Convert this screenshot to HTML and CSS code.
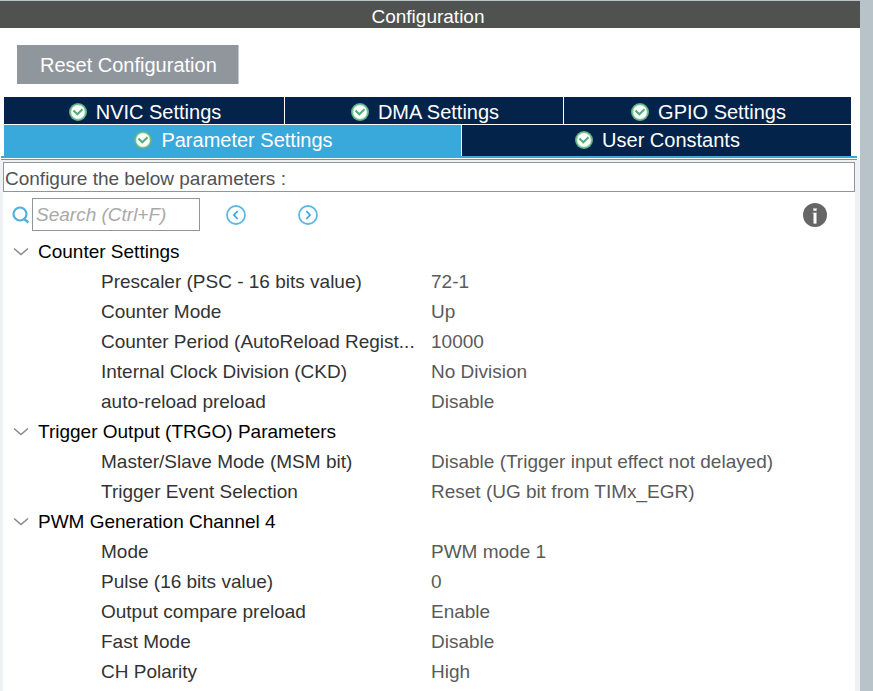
FILE: index.html
```html
<!DOCTYPE html>
<html lang="en">
<head>
<meta charset="utf-8">
<title>Configuration</title>
<link rel="stylesheet" href="styles.css">
</head>
<body>
<svg width="0" height="0" class="defs" aria-hidden="true">
  <symbol id="check" viewBox="0 0 18 18">
    <circle cx="9" cy="9" r="9" fill="#5db583"/>
    <circle cx="9" cy="9" r="7.5" fill="#a5d6b8"/>
    <circle cx="9" cy="9" r="6.7" fill="#fff"/>
    <path d="M4.500 7.500L8.300 11.300 13.500 6.300" fill="none" stroke="#4fae78" stroke-width="2"/>
  </symbol>
  <symbol id="chevron" viewBox="0 0 16 10">
    <path d="M1 1.500l7 6l7-6" fill="none" stroke="#8a8a8a" stroke-width="1.600"/>
  </symbol>
</svg>
<main class="window">
  <h1 class="title">Configuration</h1>
  <div class="toolbar"><button class="reset" type="button">Reset Configuration</button></div>
  <nav class="tabs">
    <div class="tab-row top">
      <button class="tab" type="button"><svg class="check"><use href="#check"/></svg>NVIC Settings</button>
      <button class="tab" type="button"><svg class="check"><use href="#check"/></svg>DMA Settings</button>
      <button class="tab" type="button"><svg class="check"><use href="#check"/></svg>GPIO Settings</button>
    </div>
    <div class="tab-row bottom">
      <button class="tab active" type="button"><svg class="check"><use href="#check"/></svg>Parameter Settings</button>
      <button class="tab" type="button"><svg class="check"><use href="#check"/></svg>User Constants</button>
    </div>
  </nav>
  <div class="rule"></div>
  <section class="panel">
    <p class="hint">Configure the below parameters :</p>
    <div class="search">
      <label for="search" aria-label="Search"><svg class="lens" viewBox="0 0 18 18"><circle cx="8" cy="8" r="6.500" fill="none" stroke="#4fb1e0" stroke-width="2.200"/><path d="M11.500 12.500l5 4" stroke="#4fb1e0" stroke-width="2.500"/></svg></label>
      <input id="search" type="text" placeholder="Search (Ctrl+F)">
      <button class="step" type="button" aria-label="Previous"><svg viewBox="0 0 20 20"><circle cx="10" cy="10" r="9" fill="none" stroke="#5cb9e4" stroke-width="1.800"/><path d="M11.700 6L8 10l3.700 4" fill="none" stroke="#3ba8dc" stroke-width="1.800"/></svg></button>
      <button class="step next" type="button" aria-label="Next"><svg viewBox="0 0 20 20"><circle cx="10" cy="10" r="9" fill="none" stroke="#5cb9e4" stroke-width="1.800"/><path d="M8.300 6L12 10l-3.700 4" fill="none" stroke="#3ba8dc" stroke-width="1.800"/></svg></button>
      <button class="info" type="button" aria-label="Information"><svg viewBox="0 0 24 24"><circle cx="12" cy="12" r="12" fill="#666"/><path d="M10 5h4v3h-4zM9.500 9.500h4.500v11h-4v-9.500h-.5z" fill="#b5b5b5"/><path d="M11 6h2v1.500h-2zM11 10h2v10.500h-2z" fill="#fff"/></svg></button>
    </div>
    <table class="params">
      <colgroup><col class="name-col"><col></colgroup>
      <tbody>
        <tr><th colspan="2" scope="rowgroup"><button class="group" type="button"><svg class="chevron"><use href="#chevron"/></svg>Counter Settings</button></th></tr>
        <tr><td>Prescaler (PSC - 16 bits value)</td><td>72-1</td></tr>
        <tr><td>Counter Mode</td><td>Up</td></tr>
        <tr><td>Counter Period (AutoReload Regist...</td><td>10000</td></tr>
        <tr><td>Internal Clock Division (CKD)</td><td>No Division</td></tr>
        <tr><td>auto-reload preload</td><td>Disable</td></tr>
      </tbody>
      <tbody>
        <tr><th colspan="2" scope="rowgroup"><button class="group" type="button"><svg class="chevron"><use href="#chevron"/></svg>Trigger Output (TRGO) Parameters</button></th></tr>
        <tr><td>Master/Slave Mode (MSM bit)</td><td>Disable (Trigger input effect not delayed)</td></tr>
        <tr><td>Trigger Event Selection</td><td>Reset (UG bit from TIMx_EGR)</td></tr>
      </tbody>
      <tbody>
        <tr><th colspan="2" scope="rowgroup"><button class="group" type="button"><svg class="chevron"><use href="#chevron"/></svg>PWM Generation Channel 4</button></th></tr>
        <tr><td>Mode</td><td>PWM mode 1</td></tr>
        <tr><td>Pulse (16 bits value)</td><td>0</td></tr>
        <tr><td>Output compare preload</td><td>Enable</td></tr>
        <tr><td>Fast Mode</td><td>Disable</td></tr>
        <tr><td>CH Polarity</td><td>High</td></tr>
      </tbody>
    </table>
  </section>
</main>
</body>
</html>
```
FILE: styles.css
```css
* { box-sizing: border-box; }
body {
  margin: 0;
  background: #b8c3c9;
  font-family: "Liberation Sans", Arial, sans-serif;
  font-size: 19px;
  color: #333;
}
button, input { font: inherit; border: 0; margin: 0; padding: 0; background: none; }
.defs { position: absolute; }
.window {
  display: flex;
  flex-direction: column;
  min-height: calc(100vh - 1px);
  margin: 1px 13px 0 0;
  background: #fff;
}
.title {
  margin: 0;
  padding: 4px 4px 0 0;
  background: #505250;
  color: #fff;
  font-size: 19px;
  font-weight: 400;
  line-height: 23px;
  text-align: center;
}
.toolbar { padding: 17px 17px 13px; }
.reset {
  display: block;
  height: 39px;
  padding: 2px 21px 0 23px;
  background: #8f979d;
  border-right: 1px solid #c4c9cc;
  color: #fff;
  font-size: 20px;
}
.tabs { padding: 0 9px 0 4px; }
.tab-row { display: grid; column-gap: 1px; }
.top { grid-template-columns: 280fr 278fr 287fr; margin-bottom: 1px; }
.bottom { grid-template-columns: 457fr 389fr; }
.tab {
  display: flex;
  align-items: center;
  justify-content: center;
  gap: 9px;
  height: 27px;
  padding: 3px 0 0 2px;
  background: #03234b;
  color: #fff;
  font-size: 20px;
}
.bottom .tab { height: 31px; padding: 0 0 1px 2px; }
.bottom .active { background: #39a9dc; }
.check { width: 18px; height: 18px; }
.rule {
  height: 4px;
  margin: 0 3px 0 1px;
  border: solid #39a9dc;
  border-width: 2px 0 1px;
}
.panel {
  flex: 1;
  padding-top: 2px;
  background: linear-gradient(#eff1f4, #eff1f4) left / 3px 100% no-repeat,
    linear-gradient(#eff1f4, #eff1f4) right / 5px 100% no-repeat,
    linear-gradient(#eff1f4, #eff1f4) top / 100% 2px no-repeat;
}
.hint {
  margin: 0 5px 0 3px;
  padding: 3px 1px 0;
  border: 1px solid #8f979d;
  color: #525252;
  line-height: 25px;
}
.search {
  display: flex;
  align-items: center;
  height: 45px;
  padding: 0 33px 0 12px;
}
.search svg { display: block; }
.lens { width: 18px; height: 18px; }
.search input {
  width: 168px;
  height: 33px;
  margin: 0 26px 0 2px;
  padding: 0 3px;
  border: 1px solid #8f979d;
}
.search input::placeholder { color: #a9a9a9; font-style: italic; }
.step { width: 20px; height: 20px; }
.next { margin-left: 52px; }
.info { width: 24px; height: 24px; margin-left: auto; }
.params {
  width: 100%;
  table-layout: fixed;
  border-collapse: collapse;
}
.name-col { width: 431px; }
.params tr { height: 30px; }
.params th, .params td {
  padding: 0;
  text-align: left;
  font-weight: 400;
  white-space: nowrap;
}
.params td:first-child { padding-left: 101px; }
.params td:last-child { color: #5a5a5a; }
.group {
  display: flex;
  align-items: center;
  gap: 9px;
  padding-left: 13px;
  color: #000;
}
.chevron { width: 16px; height: 10px; }
```
